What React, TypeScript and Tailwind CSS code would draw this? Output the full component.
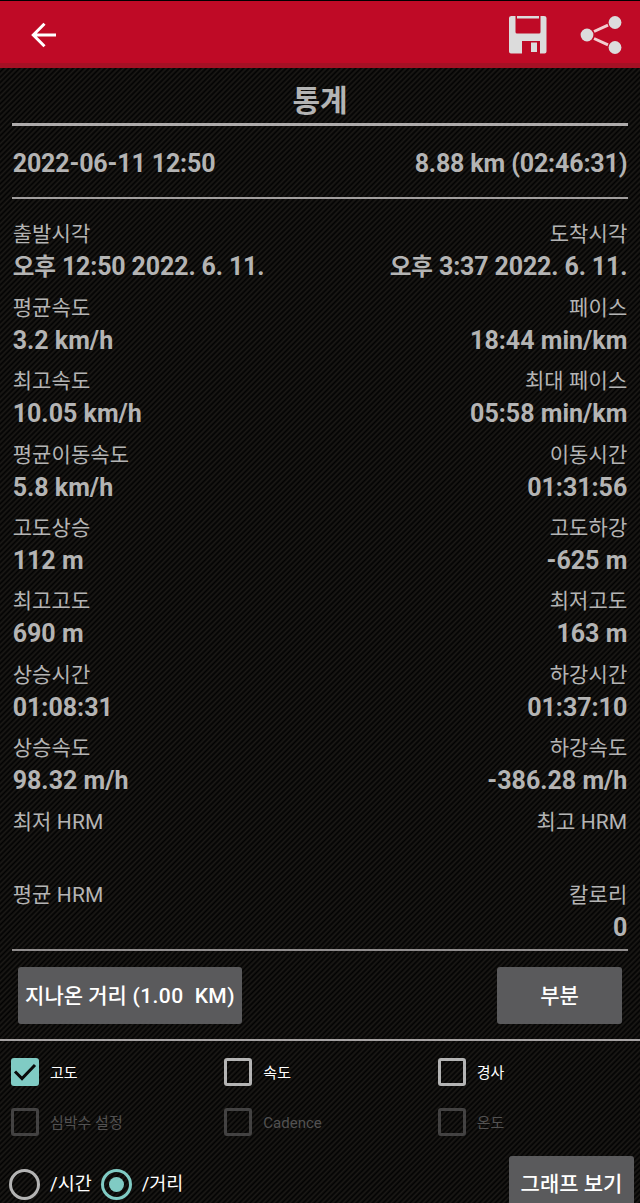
import { useState } from 'react';

interface Stat {
  label: string;
  value: string;
  meridiem?: string;
}

const rows: [Stat, Stat][] = [
  [{ label: '출발시각', meridiem: '오후', value: '12:50 2022. 6. 11.' }, { label: '도착시각', meridiem: '오후', value: '3:37 2022. 6. 11.' }],
  [{ label: '평균속도', value: '3.2 km/h' }, { label: '페이스', value: '18:44 min/km' }],
  [{ label: '최고속도', value: '10.05 km/h' }, { label: '최대 페이스', value: '05:58 min/km' }],
  [{ label: '평균이동속도', value: '5.8 km/h' }, { label: '이동시간', value: '01:31:56' }],
  [{ label: '고도상승', value: '112 m' }, { label: '고도하강', value: '-625 m' }],
  [{ label: '최고고도', value: '690 m' }, { label: '최저고도', value: '163 m' }],
  [{ label: '상승시간', value: '01:08:31' }, { label: '하강시간', value: '01:37:10' }],
  [{ label: '상승속도', value: '98.32 m/h' }, { label: '하강속도', value: '-386.28 m/h' }],
  [{ label: '최저 HRM', value: '' }, { label: '최고 HRM', value: '' }],
  [{ label: '평균 HRM', value: '' }, { label: '칼로리', value: '0' }],
];

const series = [
  { label: '고도', disabled: false },
  { label: '속도', disabled: false },
  { label: '경사', disabled: false },
  { label: '심박수 설정', disabled: true },
  { label: 'Cadence', disabled: true },
  { label: '온도', disabled: true },
];

function Header() {
  return (
    <header className="flex h-[68px] items-center border-t border-b-[5px] border-t-black border-b-[#a51024] bg-[#bf0a26] pt-[6px] pl-[30px] pr-[18px]">
      <button aria-label="Back" className="mr-auto">
        <svg width="28" height="28" viewBox="0 0 28 28" fill="none" stroke="#fff" strokeWidth="3">
          <path d="M26 14H4M14.5 2.8L3.3 14l11.2 11.2" />
        </svg>
      </button>
      <button aria-label="Save" className="mr-8">
        <svg width="40" height="40" viewBox="0 0 40 40" fill="#dcdcdc">
          <path d="M3.5 1H7.5v16Q7.5 18.5 9 18.5h22Q32.5 18.5 32.5 17V1h3.5Q38.5 1 38.5 3v33.5Q38.5 38.5 36.5 38.5H32V26H14v12.5H3Q1 38.5 1 36.5v-33.5Q1 1 3.5 1z" />
          <path d="M9 1h22v2.500H9zM23 27.5h6v9.500h-6z" />
        </svg>
      </button>
      <button aria-label="Share">
        <svg width="42" height="40" viewBox="0 0 42 40" fill="#dcdcdc">
          <path d="M14 16.5L28 10.2M14 23.5L28 29.8" stroke="#f3cdd0" strokeWidth="3" />
          <circle cx="7" cy="20" r="6.4" />
          <circle cx="35" cy="7.5" r="6.4" />
          <circle cx="35" cy="32.5" r="6.4" />
        </svg>
      </button>
    </header>
  );
}

function StatCell({ label, value, meridiem }: Stat) {
  return (
    <div>
      <div className="h-[31px] text-[21px] leading-[32px] tracking-[0.1px]">{label}</div>
      <div className="h-[35px] text-[25px] leading-[35px] font-bold">
        {meridiem ? (
          <span className="tracking-[-0.15px]">
            <span className="text-[23.6px]">{meridiem}</span> {value}
          </span>
        ) : (
          value
        )}
      </div>
    </div>
  );
}

export default function App() {
  const [checked, setChecked] = useState<string[]>(['고도']);
  const [axis, setAxis] = useState('거리');

  function toggle(label: string) {
    setChecked(checked.includes(label) ? checked.filter((l) => l !== label) : [...checked, label]);
  }

  return (
    <div className="h-[1203px] w-[640px] overflow-hidden bg-black bg-[repeating-linear-gradient(135deg,#1c1a17_0px,#020202_1.9px,#1c1a17_3.77px)] font-['Roboto','Noto_Sans_CJK_KR',sans-serif] text-[#b4b4b4]">
      <Header />

      <main className="px-3">
        <h1 className="h-[58px] border-b-[3px] border-[#adaaaa] pt-[7px] text-center text-[30px] leading-[52px] font-bold">통계</h1>
        <div className="flex h-[73px] items-center justify-between border-b-2 border-[#a09d9d] px-[0.7px] pt-[5px] text-[25px] font-bold tracking-[-0.15px]">
          <span>2022-06-11 12:50</span>
          <span>8.88 km (02:46:31)</span>
        </div>

        <div className="h-[752px] border-b-2 border-[#8f8c8c] px-[0.7px] pt-[19.4px]">
          {rows.map(([left, right]) => (
            <div key={left.label} className="flex h-[73.4px] justify-between">
              <StatCell {...left} />
              <div className="text-right">
                <StatCell {...right} />
              </div>
            </div>
          ))}
        </div>
      </main>

      <div className="flex h-[90px] items-start justify-between border-b-2 border-[#a5a2a2] px-[18px] pt-4 text-[21px] font-medium text-white">
        <button className="h-[57px] w-[224px] rounded-[3px] bg-[#5a5a5c] pt-[2px] whitespace-pre">
          지나온 거리<span className="tracking-[0.4px]"> (1.00  KM)</span>
        </button>
        <button className="h-[57px] w-[125px] rounded-[3px] bg-[#5a5a5c] pt-[2px]">부분</button>
      </div>

      <div className="grid grid-cols-3 pt-[6px]">
        {series.map(({ label, disabled }) => (
          <button
            key={label}
            disabled={disabled}
            onClick={() => toggle(label)}
            className={`flex h-[50px] items-center gap-[11px] pl-[11px] text-[15px] ${disabled ? 'text-[#525151]' : 'text-white'}`}
          >
            {checked.includes(label) ? (
              <span className="size-7 rounded-[3px] bg-[#80cbc4]">
                <svg width="28" height="28" viewBox="0 0 28 28" fill="none" stroke="#0a0a0a" strokeWidth="3">
                  <path d="M4 13.5l7 7L24 7" />
                </svg>
              </span>
            ) : (
              <span className={`size-7 rounded-[3px] border-3 ${disabled ? 'border-[#434242]' : 'border-[#b4b4b4]'}`} />
            )}
            <span className="pt-[2px]">{label}</span>
          </button>
        ))}
      </div>

      <div className="flex items-start justify-between pt-[9px] pr-[6px] pl-[9px]">
        <div className="flex gap-[9px] pt-3 text-[18.5px] text-white">
          {['시간', '거리'].map((name) => (
            <button key={name} onClick={() => setAxis(name)} className="flex h-[32px] items-center gap-[10px]">
              <span
                className={`flex size-[31px] items-center justify-center rounded-full border-3 ${axis === name ? 'border-[#80cbc4]' : 'border-[#b4b4b4]'}`}
              >
                {axis === name && <span className="size-[15px] rounded-full bg-[#80cbc4]" />}
              </span>
              <span className="pt-[2px]">/{name}</span>
            </button>
          ))}
        </div>
        <button className="h-[57px] w-[125px] rounded-[3px] bg-[#5a5a5c] text-[21px] font-medium whitespace-nowrap text-white">그래프 보기</button>
      </div>
    </div>
  );
}
